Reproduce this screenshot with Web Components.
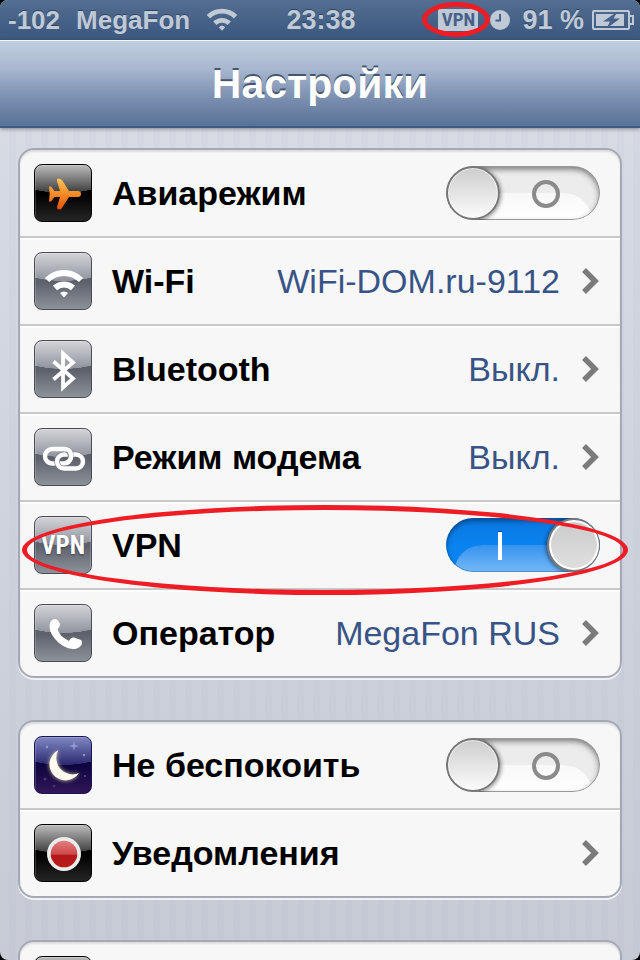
<!DOCTYPE html>
<html lang="ru">
<head>
<meta charset="utf-8">
<meta name="viewport" content="width=device-width, initial-scale=1">
<title>Настройки</title>
<style>
  html { height: 100%; background: #000; }
  body { margin: 0; height: 100%; font-family: "Liberation Sans", Arial, sans-serif; }
</style>
</head>
<body>
<settings-screen>
  <status-bar slot="status"></status-bar>
  <title-bar slot="title">Настройки</title-bar>

  <settings-group>
    <settings-row kind="switch" label="Авиарежим"><app-tile slot="icon" tone="black" glyph="plane"></app-tile></settings-row>
    <settings-row label="Wi-Fi" value="WiFi-DOM.ru-9112"><app-tile slot="icon" glyph="wifi"></app-tile></settings-row>
    <settings-row label="Bluetooth" value="Выкл."><app-tile slot="icon" glyph="bluetooth"></app-tile></settings-row>
    <settings-row label="Режим модема" value="Выкл."><app-tile slot="icon" glyph="chain"></app-tile></settings-row>
    <settings-row kind="switch" label="VPN" checked marked><app-tile slot="icon">VPN</app-tile></settings-row>
    <settings-row label="Оператор" value="MegaFon RUS"><app-tile slot="icon" glyph="phone"></app-tile></settings-row>
  </settings-group>

  <settings-group>
    <settings-row kind="switch" label="Не беспокоить"><app-tile slot="icon" tone="night" glyph="moon"></app-tile></settings-row>
    <settings-row label="Уведомления"><app-tile slot="icon" tone="black" glyph="record"></app-tile></settings-row>
  </settings-group>

  <settings-group>
    <settings-row><app-tile slot="icon" tone="black"></app-tile></settings-row>
  </settings-group>
</settings-screen>

<script>
const WIFI = `<path d="M12 27A24 24 0 0 1 46 27M20 35A13 13 0 0 1 38 35" fill="none" stroke="currentColor" stroke-width="6"/><path d="M25 40A6 6 0 0 1 33 40L29 44.500Z" fill="currentColor"/>`;

const GLYPHS = {
  plane: `<defs><linearGradient id="o" x1="0" y1="0" x2="0" y2="1"><stop offset="0" stop-color="#ffc45a"/><stop offset=".5" stop-color="#f58b27"/><stop offset="1" stop-color="#e2500a"/></linearGradient></defs>
    <path fill="url(#o)" d="M14 21.500h2l3.500 4.500H25L22 16q-.5-2.500 1.500-2.500T27 15L34 26h9a3 3 0 0 1 0 6h-9L27 43q-1 1.500-3 1.500T22 42L25 32h-5.500L16 36.500h-2l.7-7.500z"/>`,
  wifi: WIFI,
  bluetooth: `<path d="M18.500 20.500 38 37.500 28 46.500V12.500L38 21.500 18.500 38.500" fill="none" stroke="#fff" stroke-width="3.800"/>`,
  chain: `<g fill="none"><rect x="10" y="20" width="26" height="14.500" rx="7.200" stroke="#fff" stroke-width="4.400"/>
    <rect x="22" y="25.500" width="26" height="14" rx="7" stroke="#70747d" stroke-width="5.600"/>
    <rect x="22" y="25.500" width="26" height="14" rx="7" stroke="#fff" stroke-width="4.400"/>
    <path d="M31 20.500Q36.500 22 35.500 29" stroke="#70747d" stroke-width="5.600"/><path d="M29 20Q36.500 20 36 28Q35 33 31 34.200" stroke="#fff" stroke-width="4.400"/></g>`,
  phone: `<path fill="#fff" d="M15 18Q17 13.500 21 14Q23.500 15 25 19Q25 22 22.500 24Q24 31 34 36Q36 31.800 39 32.500L46 35Q47.500 36 46.500 40Q43 44.500 38 44Q28 43.500 20 34Q13 26 15 18Z"/>`,
  moon: `<path fill="#fdfaf0" style="filter:drop-shadow(0 0 2px #d8cca0)" d="M23.500 13A16 16 0 1 0 44 36A16.200 16.200 0 0 1 23.500 13Z"/>
    <g fill="#aab0e0" opacity=".7"><path d="M39 4l1 4 4 1-4 1-1 4-1-4-4-1 4-1z"/><circle cx="12" cy="10" r="1.200"/><circle cx="49" cy="18" r="1.200"/><circle cx="50" cy="39" r="1" opacity=".6"/><circle cx="10" cy="42" r="1.500" opacity=".4"/><circle cx="19" cy="49" r="1.500" opacity=".3"/></g>`,
  record: `<defs><linearGradient id="r" x1="0" y1="0" x2="0" y2="1"><stop offset="0" stop-color="#e27f7f"/><stop offset=".5" stop-color="#cf4a4a"/><stop offset=".56" stop-color="#b31717"/><stop offset="1" stop-color="#bb1d1d"/></linearGradient></defs>
    <circle cx="29" cy="29" r="17" fill="#ececec"/><circle cx="29" cy="29" r="13.300" fill="url(#r)"/>`
};

const define = (name, render) => customElements.define(name, class extends HTMLElement {
  connectedCallback() {
    if (this.shadowRoot) return;
    const t = document.createElement('template');
    t.innerHTML = render(this);
    this.attachShadow({ mode: 'open' }).append(t.content.cloneNode(true));
  }
});

define('settings-screen', () => `
<style>
  :host { display: flex; flex-direction: column; height: 100%; overflow: hidden; border-radius: 8px;
    background: repeating-linear-gradient(90deg, #0000 0 9px, #5a78a009 9px 16px), linear-gradient(#d9dde6, #c7cbd6); }
  main { flex: 1; min-height: 0; overflow: hidden; display: flex; flex-direction: column; gap: 42px; padding: 20px 18px 0; }
  ::slotted(settings-group) { flex: none; }
</style>
<slot name="status"></slot><slot name="title"></slot><main><slot></slot></main>`);

define('status-bar', () => `
<style>
  :host { display: grid; grid-template-columns: 1fr auto 1fr; align-items: center; height: 40px; padding: 0 6px 0 8px;
    background: linear-gradient(#536e90, #3f5b82 80%, #3d5a80); color: #c0c9d6; font-weight: bold; font-size: 27px; line-height: 40px;
    text-shadow: 0 -1px #2c4566; white-space: nowrap; }
  div { display: flex; align-items: center; }
  .left { gap: 16px; font-size: 26px; }
  .right { gap: 8px; justify-content: flex-end; }
  .wifi { width: 32px; height: 24px; }
  .vpn { position: relative; display: flex; margin-right: 4px; }
  .vpn b { width: 40px; height: 22px; background: #c0c9d6; color: #46618a; text-shadow: none; text-align: center;
    font: bold 19px/22px "Liberation Sans Narrow", "Roboto Condensed", "Liberation Sans", sans-serif; }
  .vpn::after { content: ""; position: absolute; inset: -7px -12px -6px -16px; border: 5px solid #ee1c24; border-radius: 50%; }
  .pct { margin-left: 4px; }
  svg { flex: none; display: block; }
</style>
<div class="left"><span>-102</span><span>MegaFon</span><svg class="wifi" viewBox="9 16 40 30">${WIFI}</svg></div>
<span>23:38</span>
<div class="right">
  <span class="vpn"><b>VPN</b></span>
  <svg width="20" height="20" viewBox="0 0 20 20"><circle cx="10" cy="10" r="10" fill="currentColor"/><path d="M10 4v6.500H5.500" fill="none" stroke="#46618a" stroke-width="2"/></svg>
  <span class="pct">91 %</span>
  <svg width="42" height="20" viewBox="0 0 42 20"><rect x="1" y="1" width="36" height="18" rx="1" fill="none" stroke="currentColor" stroke-width="2"/><path d="M38 6h3v8h-3" fill="none" stroke="currentColor" stroke-width="2"/><path d="M4 4h28v12H4z" fill="currentColor"/><path d="M25.500 1.500 11 11.500h7L14.500 18.500 28 8.500h-6.500z" fill="#46618a"/></svg>
</div>`);

define('title-bar', () => `
<style>
  :host { display: block; flex: none; position: relative; box-sizing: border-box; height: 88px; border-top: 1px solid #f2f6fa; border-bottom: 2px solid #3d5a80;
    background: linear-gradient(#c0cede, #a9b8d0 32%, #8396b5 60%, #587197); box-shadow: 0 1px 4px #0006; text-align: center; }
  h1 { margin: 0; font-size: 41px; line-height: 86px; color: #fff; text-shadow: 0 -2px #46566f; }
</style>
<h1><slot></slot></h1>`);

define('settings-group', () => `
<style>
  :host { display: block; border: 2px solid #a4a9b5; border-radius: 16px; background: #f7f7f7; box-shadow: 0 2px #f0f2f6, inset 0 2px 2px #0000001c; }
  ::slotted(:not(:last-child)) { border-bottom: 2px solid #c8c8c8; }
  ::slotted(:not(:first-child)) { box-shadow: inset 0 2px #fff; }
</style>
<slot></slot>`);

define('settings-row', el => {
  const label = el.getAttribute('label') || '';
  const value = el.getAttribute('value') || '';
  const isSwitch = el.getAttribute('kind') === 'switch';
  const tag = isSwitch ? 'label' : 'a';
  return `
<style>
  :host { display: block; position: relative; }
  .row { display: flex; align-items: center; min-height: 86px; padding: 0 20px 0 14px; color: #000; text-decoration: none; font-size: 34px; line-height: 40px; }
  .name { flex: 1; margin-left: 20px; font-weight: bold; white-space: nowrap; }
  .value { color: #385487; white-space: nowrap; }
  svg { flex: none; margin: 0 1px 0 22px; }
  :host([marked])::after { content: ""; position: absolute; inset: 3px -8px -7px 2px; border: 5px solid #ee1c24; border-radius: 50%; pointer-events: none; z-index: 1; }
  input { appearance: none; position: relative; flex: none; margin: 0; width: 154px; height: 54px; border-radius: 27px; overflow: hidden;
    background: radial-gradient(circle at 0 100%, #0000 26px, #ececec 27px) 119px 27px / 35px 27px no-repeat,
      linear-gradient(#f8f8f8, #fff) 0 27px / 100% 27px no-repeat, #ececec;
    box-shadow: inset 0 0 0 1px #999, inset 0 3px 6px #0008; }
  input::before { content: ""; position: absolute; left: 0; top: 0; width: 50px; height: 50px; border: 2px solid #777; border-radius: 50%;
    background: linear-gradient(#cdcdcd, #fbfbfb); box-shadow: inset 0 0 0 1px #fff9, 1px 1px 4px #0007; }
  input::after { content: ""; position: absolute; left: 86px; top: 14px; width: 20px; height: 20px; border: 4px solid #8b8b8b; border-radius: 50%; }
  input:checked { background: radial-gradient(circle at 100% 100%, #0000 26px, #0a83ee 27px) 0 27px / 35px 27px no-repeat,
      linear-gradient(#3592ef, #75b9f7) 0 27px / 100% 27px no-repeat, linear-gradient(#0a77e2, #0a83ee 50%);
    box-shadow: inset 0 0 0 1px #0d4f9c55, inset 0 3px 5px #0006; }
  input:checked::before { left: 101px; background: linear-gradient(#cbcbcb, #e0e0e0); box-shadow: inset 0 0 0 2px #fff, -1px 1px 4px #0008; }
  input:checked::after { left: 52px; width: 4px; height: 28px; border: 0; border-radius: 0; background: #fff; box-shadow: 0 -1px #0a4c9a; }
</style>
<${tag} class="row"${isSwitch ? '' : ' href="#"'}>
  <slot name="icon"></slot>
  <span class="name">${label}</span>
  ${isSwitch ? `<input type="checkbox" role="switch"${el.hasAttribute('checked') ? ' checked' : ''}>`
    : (value ? `<span class="value">${value}</span>` : '') + `<svg width="17" height="26" viewBox="0 0 17 26"><path d="M2 2l11 11L2 24" fill="none" stroke="#7b7b7b" stroke-width="5.500"/></svg>`}
</${tag}>`;
});

define('app-tile', el => `
<style>
  :host { position: relative; display: grid; place-items: center; flex: none; box-sizing: border-box; width: 58px; height: 58px; border-radius: 8px; overflow: hidden; color: #fff;
    --edge: #4a4d57; --top: #d4d5d8; --mid: #9295a0; --low: #5c616c; --end: #91959d;
    border: 1px solid var(--edge);
    background: radial-gradient(ellipse 60px 28px at 50% 0, #0000 99%, var(--low) 100%) no-repeat, linear-gradient(var(--top), var(--mid) 48%);
    font: bold 25px/58px "Liberation Sans Narrow", "Roboto Condensed", "Liberation Sans", sans-serif; text-shadow: 0 1px 2px #0006; }
  :host([tone=black]) { --edge: #000; --top: #bdbdbd; --mid: #3f3f3f; --low: #000; --end: #282828; }
  :host([tone=night]) { --edge: #1b1450; --top: #8088c4; --mid: #2d2c72; --low: #0e0540; --end: #331858; }
  .low { grid-area: 1/1; width: 100%; height: 100%; background: linear-gradient(#0000 50%, var(--end)); box-shadow: inset 0 0 0 1px #ffffff30; border-radius: 7px; }
  svg, span { grid-area: 1/1; }
</style>
<i class="low"></i>
${GLYPHS[el.getAttribute('glyph')] ? `<svg width="58" height="58" viewBox="0 0 58 58">${GLYPHS[el.getAttribute('glyph')]}</svg>` : '<span><slot></slot></span>'}`);
</script>
</body>
</html>
